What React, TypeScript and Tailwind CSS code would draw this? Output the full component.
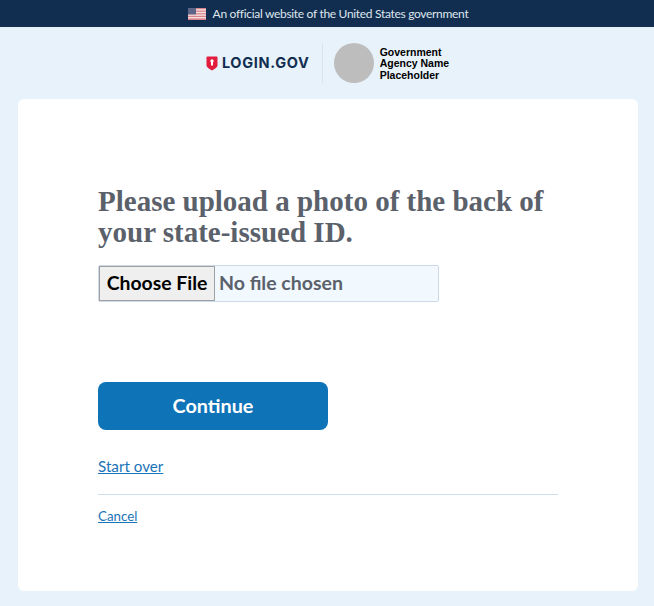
export default function App() {
  const sans = "font-['Lato','Noto_Sans',sans-serif]";
  return (
    <div className={`w-[654px] h-[606px] overflow-hidden bg-[#e8f2fa] ${sans}`}>
      <div className="h-[27px] bg-[#112e51] flex items-center justify-center gap-[7px] pl-[2px]">
        <svg width="18" height="12" viewBox="0 0 18 12" className="block">
          <rect width="18" height="12" fill="#f4dede" />
          <rect y="0" width="18" height="1.2" fill="#d8838c" />
          <rect y="2.6" width="18" height="1.2" fill="#d8838c" />
          <rect y="5.2" width="18" height="1.2" fill="#d8838c" />
          <rect y="7.8" width="18" height="1.2" fill="#d8838c" />
          <rect y="10.4" width="18" height="1.6" fill="#d8838c" />
          <rect width="8" height="6.4" fill="#5c6488" />
        </svg>
        <span className="text-[12px] leading-none tracking-[-0.31px] text-[#dfe5ec]">An official website of the United States government</span>
      </div>
      <header className="h-[72px] flex items-center justify-center pl-[1px]">
        <div className="flex items-center gap-[4px] pr-[12px]">
          <svg width="12" height="15" viewBox="0 0 12 15" className="block">
            <path d="M0.5 1.5 Q0.5 0.5 1.5 0.5 H10.5 Q11.5 0.5 11.5 1.5 V9.5 Q11.5 11.5 6 14.5 Q0.5 11.5 0.5 9.5 Z" fill="#e21c3d" />
            <circle cx="6" cy="5" r="1.7" fill="#fff" />
            <rect x="5" y="5" width="2" height="4.5" fill="#fff" />
          </svg>
          <span className="text-[14.5px] leading-none font-bold tracking-[0.7px] text-[#112e51] font-['Inter',sans-serif]">LOGIN.GOV</span>
        </div>
        <div className="w-px h-[40px] bg-[#d6e4f0]" />
        <div className="w-[40px] h-[40px] rounded-full bg-[#bdbdbd] ml-[11px]" />
        <div className="ml-[6px] pt-[2px] text-[10.5px] leading-[11.5px] font-bold text-black font-['Liberation_Sans',sans-serif]">
          <div>Government</div>
          <div>Agency Name</div>
          <div>Placeholder</div>
        </div>
      </header>
      <main className="mx-[18px] w-[620px] h-[492px] bg-white rounded-[6px] px-[80px] pt-[87px]">
        <h1 className="text-[29px] leading-[31px] font-bold text-[#5b616b] font-['Liberation_Serif',serif]">
          Please upload a photo of the back of your state-issued ID.
        </h1>
        <div className="mt-[17px] w-[341px] h-[37px] flex items-stretch bg-[#f1f8fe] border border-[#cbd9e8] rounded-[2px]">
          <div className="w-[116px] pb-[1px] bg-[#efefef] border border-[#a0a0a0] flex items-center justify-center text-[19.4px] font-bold text-black">
            Choose File
          </div>
          <div className="flex items-center pl-[4px] pb-[1px] text-[19.5px] font-bold text-[#5b616b]">No file chosen</div>
        </div>
        <button className="mt-[80px] block w-[230px] h-[48px] bg-[#0f73b8] rounded-[8px] text-white text-[19.8px] font-bold">
          Continue
        </button>
        <a className="mt-[26px] block w-max text-[15.2px] leading-[20px] text-[#1a74b8] underline">Start over</a>
        <div className="mt-[18px] h-px bg-[#cfe0ef]" />
        <a className="mt-[12px] block w-max text-[13.3px] leading-[18px] text-[#1a74b8] underline">Cancel</a>
      </main>
    </div>
  );
}
